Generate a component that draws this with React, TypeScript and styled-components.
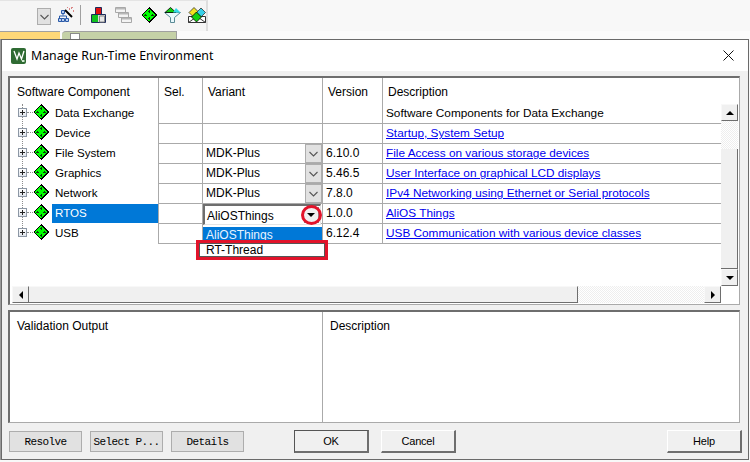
import styled, { createGlobalStyle } from 'styled-components';

const GlobalStyle = createGlobalStyle`
  html, body {
    margin: 0;
    padding: 0;
    background: #f8f8f8;
    overflow: hidden;
  }
  * { box-sizing: border-box; }
`;

const uiFont = `"Liberation Sans", Arial, sans-serif`;
const dither = `repeating-conic-gradient(#eeeeee 0 25%, #ffffff 0 50%) 0 0 / 2px 2px`;

const Page = styled.div`
  width: 750px;
  height: 462px;
  overflow: hidden;
  font-family: ${uiFont};
  font-size: 12px;
  color: #000;
`;
const Toolbar = styled.div`
  width: 208px;
  height: 31px;
  padding: 6px 0 0 37px;
  background: #f5f5f5;
  border-top: 1px solid #e4e4e4;
  border-right: 2px solid #dedede;
  display: flex;
  align-items: flex-start;
`;
const ToolCombo = styled.div`
  width: 14px;
  height: 17px;
  margin: 1px 7px 0 0;
  background: #e1e1e1;
  border: 1px solid #adadad;
  display: flex;
  align-items: center;
  justify-content: center;
`;
const ToolSep = styled.div`
  width: 1px;
  height: 20px;
  margin: -2px 10px 0 3px;
  background: #a0a0a0;
`;
const ToolIcon = styled.svg<{ $gap?: number }>`
  display: block;
  flex: none;
  margin-right: ${(p) => p.$gap ?? 0}px;
`;
const TabStrip = styled.div`
  height: 8px;
  display: flex;
  background: #fbfbfb;
  overflow: hidden;
`;
const YellowTab = styled.div`
  width: 60px;
  height: 12px;
  background: #ffd878;
  border-top: 1px solid #a0a0a0;
`;
const GreenTab = styled.div`
  width: 115px;
  height: 12px;
  margin-left: 2px;
  padding-left: 8px;
  background: #c5d1a7;
  border-top: 1px solid #a0a0a0;
  border-right: 1px solid #a0a0a0;
  border-top-left-radius: 4px;
`;
const TabPage = styled.div`
  width: 10px;
  height: 10px;
  margin-top: 1px;
  background: #fff;
  border: 1px solid #8a8a8a;
`;
const Dialog = styled.div`
  width: 748px;
  height: 421px;
  margin-left: 1px;
  background: #f0f0f0;
  border: 1px solid #6a6a6a;
  box-shadow: -1px 0 0 #9a9a9a;
`;
const TitleBar = styled.div`
  height: 31px;
  background: #fff;
  display: flex;
  align-items: center;
  padding: 0 14px 0 9px;
`;
const Title = styled.div`
  flex: 1;
  margin-left: 5px;
  font-family: "Noto Sans", sans-serif;
  font-size: 12.3px;
`;
const Panel = styled.div<{ $height: number; $gap: number }>`
  width: 732px;
  height: ${(p) => p.$height}px;
  margin: ${(p) => p.$gap}px 0 0 6px;
  background: #fff;
  border-style: solid;
  border-color: #6e6e6e #aaaaaa #aaaaaa #6e6e6e;
  border-width: 2px 1px 1px 2px;
  display: flex;
  flex-direction: column;
`;
const HeaderRow = styled.div`
  height: 26px;
  flex: none;
  display: grid;
  grid-template-columns: 149px 44px 120px 60px 338px;
`;
const HeaderCell = styled.div<{ $last?: boolean }>`
  padding: 4px 0 0 5px;
  line-height: 20px;
  border-right: ${(p) => (p.$last ? 'none' : '1px solid #aaaaaa')};
  &:first-child { padding-left: 7px; }
`;
const ListArea = styled.div`
  height: 182px;
  flex: none;
  display: flex;
`;
const Rows = styled.div`
  width: 711px;
  position: relative;
`;
const TreeLine = styled.div`
  position: absolute;
  left: 12px;
  top: 0;
  height: 130px;
  border-left: 1px dotted #8c8c8c;
`;
const Row = styled.div`
  height: 20px;
  display: grid;
  grid-template-columns: 149px 44px 120px 60px 338px;
`;
const TreeCell = styled.div`
  border-right: 1px solid #aaaaaa;
  position: relative;
  display: flex;
  align-items: flex-start;
  padding-left: 8px;
  height: 20px;
`;
const Expander = styled.div`
  width: 9px;
  height: 9px;
  flex: none;
  margin-top: 4px;
  background: linear-gradient(#ffffff, #dfe3ea);
  border: 1px solid #8c97a5;
  position: relative;
  &::before {
    content: '';
    position: absolute;
    left: 1px;
    top: 3px;
    width: 5px;
    height: 1px;
    background: #222;
  }
  &::after {
    content: '';
    position: absolute;
    left: 3px;
    top: 1px;
    width: 1px;
    height: 5px;
    background: #222;
  }
`;
const Dots = styled.div`
  width: 6px;
  flex: none;
  margin-top: 8px;
  border-top: 1px dotted #8c8c8c;
`;
const TreeLabel = styled.div<{ $selected?: boolean }>`
  margin-left: 3px;
  flex: 1;
  height: 19px;
  line-height: 18px;
  padding-left: 3px;
  font-size: 11.6px;
  background: ${(p) => (p.$selected ? '#0078d7' : 'transparent')};
  color: ${(p) => (p.$selected ? '#fff' : '#000')};
`;
const Cell = styled.div`
  position: relative;
  height: 20px;
  line-height: 19px;
  padding-left: 3px;
  border-right: 1px solid #aaaaaa;
  border-bottom: 1px solid #aaaaaa;
  white-space: nowrap;
`;
const DescCell = styled(Cell)`
  border-right: none;
  font-size: 11.8px;
`;
const Link = styled.a`
  color: #0000ee;
  text-decoration: underline;
`;
const ComboButton = styled.div`
  position: absolute;
  right: 0;
  top: 0;
  width: 17px;
  height: 19px;
  background: #e1e1e1;
  border: 1px solid #adadad;
  display: flex;
  align-items: center;
  justify-content: center;
`;
const OpenCombo = styled.div`
  position: absolute;
  left: 0;
  top: 0;
  width: 118px;
  height: 21px;
  padding-left: 2px;
  line-height: 20px;
  background: #fff;
  border-style: solid;
  border-color: #6e6e6e #e4e4e4 #e4e4e4 #6e6e6e;
  border-width: 2px 1px 1px 2px;
  z-index: 2;
`;
const ArrowButton = styled.div`
  position: absolute;
  right: 1px;
  top: 1px;
  width: 15px;
  height: 16px;
  background: #f0f0f0;
  border-right: 1px solid #8c8c8c;
  border-bottom: 1px solid #8c8c8c;
  &::after {
    content: '';
    position: absolute;
    left: 3px;
    top: 6px;
    border-left: 4px solid transparent;
    border-right: 4px solid transparent;
    border-top: 4px solid #000;
  }
`;
const RedCircle = styled.div`
  position: absolute;
  left: 98px;
  top: 1px;
  width: 21px;
  height: 20px;
  border: 3px solid #e2132a;
  border-radius: 50%;
  z-index: 3;
`;
const DropList = styled.div`
  position: absolute;
  left: 0;
  top: 23px;
  width: 119px;
  height: 14px;
  background: #0078d7;
  color: #e8f3ff;
  padding-left: 3px;
  line-height: 16px;
  overflow: hidden;
  z-index: 2;
`;
const RedBox = styled.div`
  position: absolute;
  left: -7px;
  top: 36px;
  width: 132px;
  height: 20px;
  padding-left: 7px;
  background: #fff;
  border: 3px solid #e2132a;
  line-height: 14px;
  outline: 1px solid #555;
  outline-offset: -4px;
  z-index: 3;
`;
const VScroll = styled.div`
  width: 17px;
  display: flex;
  flex-direction: column;
  background: ${dither};
`;
const ScrollButton = styled.div`
  width: 17px;
  height: 17px;
  flex: none;
  background: #f0f0f0;
  border-style: solid;
  border-color: #f8f8f8 #6e6e6e #6e6e6e #f8f8f8;
  border-width: 1px;
  display: flex;
  align-items: center;
  justify-content: center;
`;
const Arrow = styled.div<{ $dir: 'up' | 'down' | 'left' | 'right' }>`
  width: 0;
  height: 0;
  border: 4px solid transparent;
  ${(p) => (p.$dir === 'up' ? 'border-bottom-color:#000;border-top-width:0;' : '')}
  ${(p) => (p.$dir === 'down' ? 'border-top-color:#000;border-bottom-width:0;' : '')}
  ${(p) => (p.$dir === 'left' ? 'border-right-color:#000;border-left-width:0;' : '')}
  ${(p) => (p.$dir === 'right' ? 'border-left-color:#000;border-right-width:0;' : '')}
`;
const VTrack = styled.div`
  height: 28px;
  flex: none;
`;
const VThumb = styled.div`
  height: 120px;
  flex: none;
  background: #f0f0f0;
  border-bottom: 1px solid #6e6e6e;
  border-right: 1px solid #6e6e6e;
`;
const HScroll = styled.div`
  height: 17px;
  width: 711px;
  padding-left: 2px;
  flex: none;
  display: flex;
`;
const HTrack = styled.div`
  flex: 1;
  display: flex;
  background: ${dither};
`;
const HThumb = styled.div`
  width: 549px;
  background: #f0f0f0;
  border-top: 1px solid #f8f8f8;
  border-right: 1px solid #6e6e6e;
  border-bottom: 1px solid #6e6e6e;
`;
const OutputBody = styled.div`
  flex: 1;
  display: grid;
  grid-template-columns: 313px 1fr;
`;
const OutputCol = styled.div<{ $divider?: boolean }>`
  padding: 4px 0 0 7px;
  line-height: 20px;
  border-right: ${(p) => (p.$divider ? '1px solid #aaaaaa' : 'none')};
`;
const Footer = styled.div`
  display: flex;
  align-items: center;
  padding: 7px 5px 0 7px;
`;
const FlatButton = styled.button`
  width: 73px;
  height: 21px;
  margin-right: 8px;
  padding: 0;
  background: #e1e1e1;
  border: 1px solid #adadad;
  font-family: "Liberation Mono", monospace;
  font-size: 11px;
  letter-spacing: -0.6px;
  color: #000;
`;
const DialogButton = styled.button<{ $primary?: boolean; $left: number }>`
  width: 75px;
  height: 23px;
  margin-left: ${(p) => p.$left}px;
  padding: 0;
  background: #f0f0f0;
  font-family: ${uiFont};
  font-size: 11px;
  letter-spacing: -0.2px;
  color: #000;
  border-style: solid;
  border-color: ${(p) => (p.$primary ? '#555' : '#fff')} #6e6e6e #6e6e6e ${(p) => (p.$primary ? '#555' : '#fff')};
  border-width: 1px 2px 2px 1px;
`;

const DiamondIcon = ({ gap = 0 }: { gap?: number }) => (
  <ToolIcon $gap={gap} width="16" height="16" viewBox="0 0 16 16" shapeRendering="crispEdges">
    <path d="M8 0 16 8 8 16 0 8z" fill="#000" />
    <path d="M8 1.500 14.500 8 8 14.500 1.500 8z" fill="#00ff00" />
    <path d="M7 4h2v1H7zM7.500 3h1v3h-1zM7 11h2v1H7zM7.500 10h1v3h-1zM3 7.500h3v1H3zM4 7h1v2H4zM10 7.500h3v1h-3zM11 7h1v2h-1z" fill="#0a3a0a" />
  </ToolIcon>
);

const Chevron = () => (
  <svg width="9" height="6" viewBox="0 0 9 6">
    <path d="M.5 1 4.500 5 8.500 1" fill="none" stroke="#555" strokeWidth="1.100" />
  </svg>
);

const WizardIcon = () => (
  <ToolIcon width="19" height="18" viewBox="0 0 19 18">
    <path d="M5 5.500v3M1.500 12V9h7v3" fill="none" stroke="#2b5aa8" />
    <path d="M3.500 3.500h3v3h-3zM.5 11.500h3v3h-3zM3.500 11.500h3v3h-3zM7.500 11.500h3v3h-3z" fill="#bcd0f0" stroke="#2b5aa8" />
    <path d="M7 3l7 7" stroke="#000" strokeWidth="2" />
    <path d="M9 0h1M13 1h1M15 4h1M11 2h1M14 0h1" stroke="#c01818" />
  </ToolIcon>
);

const BoxesIcon = () => (
  <ToolIcon $gap={9} width="15" height="16" viewBox="0 0 15 16">
    <path d="M4.500.5h6v7h-6z" fill="#e01010" stroke="#1c2b5a" />
    <path d="M.5 7.500h14v8H.5z" fill="#dcdcdc" stroke="#1c2b5a" />
    <path d="M1 8h6v7H1z" fill="#10c020" />
    <path d="M8.500 9h5v6h-5z" fill="#e8e8e8" stroke="#888" />
  </ToolIcon>
);

const WindowsIcon = () => (
  <ToolIcon $gap={9} width="17" height="16" viewBox="0 0 17 16">
    <path d="M.5.5h10v5H.5zM3.500 5.500h10v5h-10zM6.500 10.500h10v5h-10z" fill="#f4f4f4" stroke="#a8a8a8" />
    <path d="M1 1h9v1.500H1zM4 6h9v1.500H4zM7 11h9v1.500H7z" fill="#b8b8b8" />
  </ToolIcon>
);

const FunnelIcon = () => (
  <ToolIcon $gap={7} width="17" height="16" viewBox="0 0 17 16">
    <path d="M.5 5.500h16L10.500 10.500v5h-4v-5z" fill="#e8f8fc" stroke="#5a8a96" />
    <path d="M6.500 .5 12 5.500H1z" fill="#10d010" stroke="#000" strokeWidth=".8" />
    <path d="M12 1l4.500 4.500H9z" fill="#30d8e8" />
  </ToolIcon>
);

const PackIcon = () => (
  <ToolIcon width="18" height="16" viewBox="0 0 18 16">
    <path d="M.5 9.500h17v6H.5z" fill="#fff" stroke="#333" />
    <path d="M.5 15.500 9 9.500l8.500 6" fill="none" stroke="#333" />
    <path d="M6 .5 11 5.500 6 10.500 1 5.500z" fill="#f0e020" stroke="#333" strokeWidth=".8" />
    <path d="M13 1l4.500 4.500L13 10 8.500 5.500z" fill="#38d0e8" stroke="#333" strokeWidth=".8" />
    <path d="M8.500 5 13.500 10 8.500 15 3.500 10z" fill="#10d010" stroke="#000" strokeWidth=".8" />
  </ToolIcon>
);

const AppIcon = () => (
  <ToolIcon width="15" height="16" viewBox="0 0 15 16">
    <rect width="15" height="16" rx="2" fill="#2f6b33" />
    <path d="M3 3 6 11 8 5 10.500 11 13 3" fill="none" stroke="#fff" strokeWidth="1.300" />
    <path d="M11 12h2.500v2H11z" fill="#cfe8cf" />
  </ToolIcon>
);

const CloseIcon = () => (
  <svg width="11" height="11" viewBox="0 0 11 11">
    <path d="M.5.5l10 10M10.500.5l-10 10" stroke="#111" strokeWidth="1" />
  </svg>
);

type ComponentRow = {
  name: string;
  variant?: string;
  version?: string;
  desc: string;
  link: boolean;
};

const components: ComponentRow[] = [
  { name: 'Data Exchange', desc: 'Software Components for Data Exchange', link: false },
  { name: 'Device', desc: 'Startup, System Setup', link: true },
  { name: 'File System', variant: 'MDK-Plus', version: '6.10.0', desc: 'File Access on various storage devices', link: true },
  { name: 'Graphics', variant: 'MDK-Plus', version: '5.46.5', desc: 'User Interface on graphical LCD displays', link: true },
  { name: 'Network', variant: 'MDK-Plus', version: '7.8.0', desc: 'IPv4 Networking using Ethernet or Serial protocols', link: true },
  { name: 'RTOS', version: '1.0.0', desc: 'AliOS Things', link: true },
  { name: 'USB', version: '6.12.4', desc: 'USB Communication with various device classes', link: true },
];

export default function App() {
  return (
    <Page>
      <GlobalStyle />
      <Toolbar>
        <ToolCombo>
          <Chevron />
        </ToolCombo>
        <WizardIcon />
        <ToolSep />
        <BoxesIcon />
        <WindowsIcon />
        <DiamondIcon gap={7} />
        <FunnelIcon />
        <PackIcon />
      </Toolbar>
      <TabStrip>
        <YellowTab />
        <GreenTab>
          <TabPage />
        </GreenTab>
      </TabStrip>
      <Dialog>
        <TitleBar>
          <AppIcon />
          <Title>Manage Run-Time Environment</Title>
          <CloseIcon />
        </TitleBar>
        <Panel $height={229} $gap={5}>
          <HeaderRow>
            <HeaderCell>Software Component</HeaderCell>
            <HeaderCell>Sel.</HeaderCell>
            <HeaderCell>Variant</HeaderCell>
            <HeaderCell>Version</HeaderCell>
            <HeaderCell $last>Description</HeaderCell>
          </HeaderRow>
          <ListArea>
            <Rows>
              <TreeLine />
              {components.map((row) => (
                <Row key={row.name}>
                  <TreeCell>
                    <Expander />
                    <Dots />
                    <DiamondIcon />
                    <TreeLabel $selected={row.name === 'RTOS'}>{row.name}</TreeLabel>
                  </TreeCell>
                  <Cell />
                  <Cell>
                    {row.variant}
                    {row.variant && (
                      <ComboButton>
                        <Chevron />
                      </ComboButton>
                    )}
                    {row.name === 'RTOS' && (
                      <>
                        <OpenCombo>
                          AliOSThings
                          <ArrowButton />
                        </OpenCombo>
                        <RedCircle />
                        <DropList>AliOSThings</DropList>
                        <RedBox>RT-Thread</RedBox>
                      </>
                    )}
                  </Cell>
                  <Cell>{row.version}</Cell>
                  <DescCell>{row.link ? <Link>{row.desc}</Link> : row.desc}</DescCell>
                </Row>
              ))}
            </Rows>
            <VScroll>
              <ScrollButton>
                <Arrow $dir="up" />
              </ScrollButton>
              <VTrack />
              <VThumb />
              <ScrollButton>
                <Arrow $dir="down" />
              </ScrollButton>
            </VScroll>
          </ListArea>
          <HScroll>
            <ScrollButton>
              <Arrow $dir="left" />
            </ScrollButton>
            <HTrack>
              <HThumb />
            </HTrack>
            <ScrollButton>
              <Arrow $dir="right" />
            </ScrollButton>
          </HScroll>
        </Panel>
        <Panel $height={113} $gap={5}>
          <OutputBody>
            <OutputCol $divider>Validation Output</OutputCol>
            <OutputCol>Description</OutputCol>
          </OutputBody>
        </Panel>
        <Footer>
          <FlatButton>Resolve</FlatButton>
          <FlatButton>Select P...</FlatButton>
          <FlatButton>Details</FlatButton>
          <DialogButton $primary $left={42}>OK</DialogButton>
          <DialogButton $left={12}>Cancel</DialogButton>
          <DialogButton $left={211}>Help</DialogButton>
        </Footer>
      </Dialog>
    </Page>
  );
}
